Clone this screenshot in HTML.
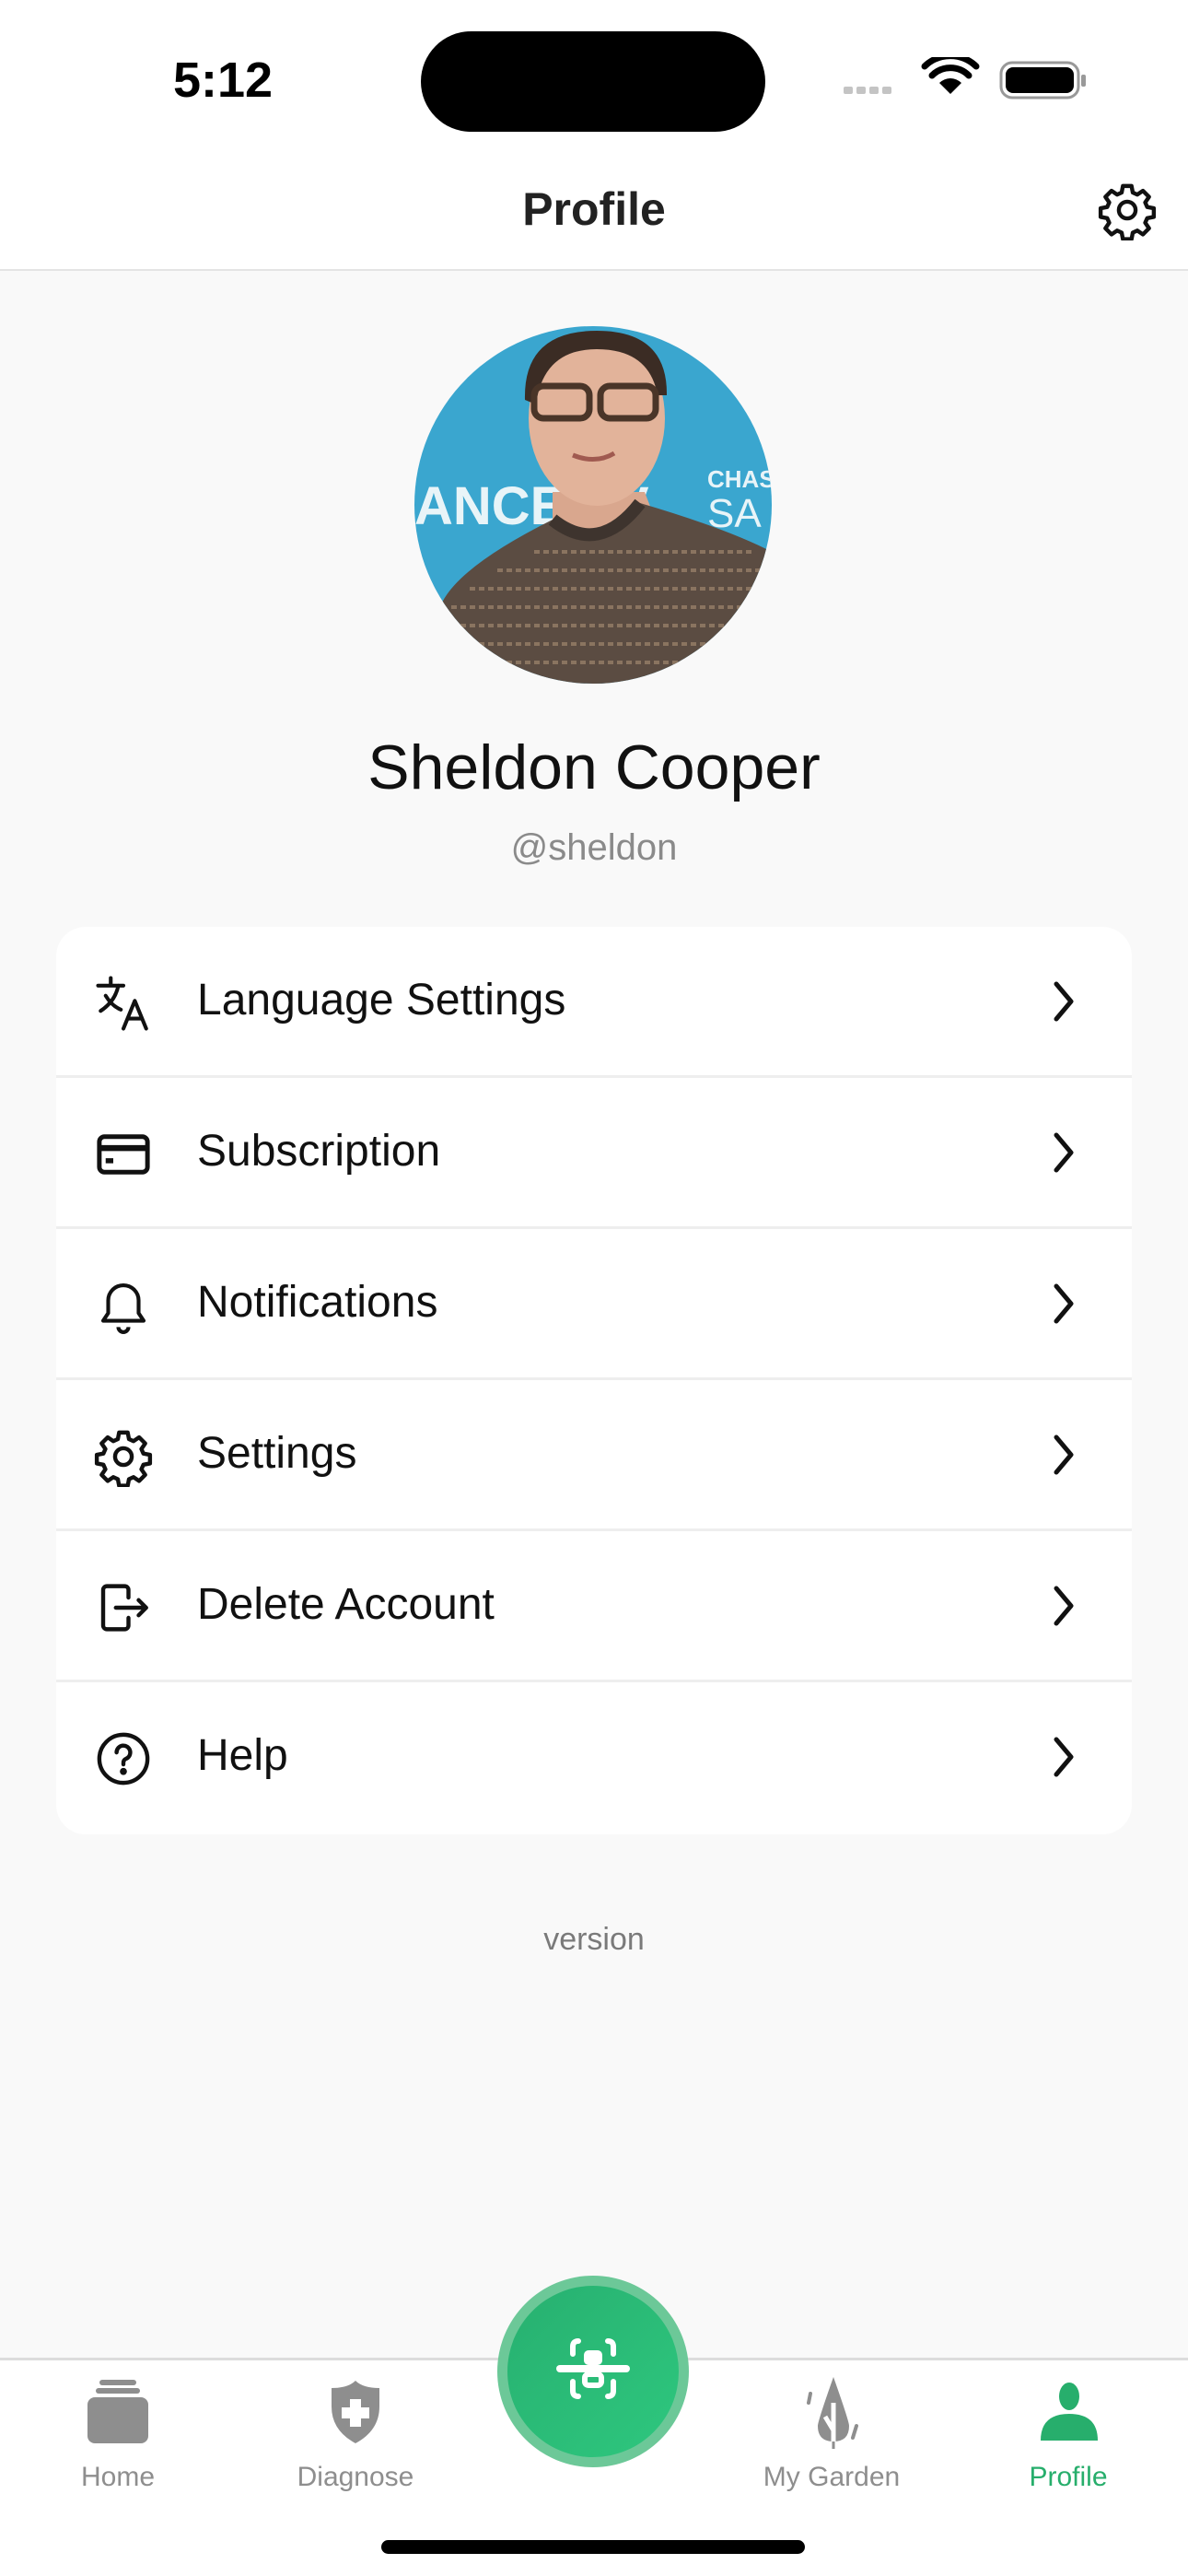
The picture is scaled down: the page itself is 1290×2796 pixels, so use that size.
<!DOCTYPE html>
<html><head><meta charset="utf-8"><style>
*{margin:0;padding:0;box-sizing:border-box}
body{width:1290px;height:2796px;background:#f9f9f9;font-family:"Liberation Sans",sans-serif;position:relative;overflow:hidden}
.abs{position:absolute}
.top{left:0;top:0;width:1290px;height:294px;background:#fff;border-bottom:2px solid #e4e4e4}
.card{left:61px;top:1006px;width:1168px;height:985px;background:#fff;border-radius:32px;overflow:hidden}
.row{position:relative;height:164px;border-bottom:3px solid #eeeeee}
.row:last-child{border-bottom:none}
.row .t{position:absolute;left:153px;top:0;line-height:160px;font-size:48px;color:#111}
.row svg.ic{position:absolute;left:40px;top:50px}
.row svg.ch{position:absolute;left:1074px;top:56px}
.tab{left:0;top:2559px;width:1290px;height:237px;background:#fff;border-top:3px solid #dcdcdc}
.lbl{font-size:30px;color:#8e8e8e;text-align:center;width:240px}
</style></head><body>
<div class="abs top"></div>
<div class="abs" style="left:188px;top:56px;font-size:54px;font-weight:bold;color:#000">5:12</div>
<div class="abs" style="left:457px;top:34px;width:374px;height:109px;background:#000;border-radius:55px"></div>
<svg class="abs" style="left:912px;top:62px" width="270" height="52">
<g fill="#c4c4c4"><rect x="4" y="32" width="10" height="8" rx="2"/><rect x="18" y="32" width="10" height="8" rx="2"/><rect x="32" y="32" width="10" height="8" rx="2"/><rect x="46" y="32" width="10" height="8" rx="2"/></g>
<path d="M120 40 L108 28 A17 17 0 0 1 132 28 Z" fill="#000"/>
<path d="M100 20 A28 28 0 0 1 140 20" stroke="#000" stroke-width="7" fill="none" stroke-linecap="round"/>
<path d="M92 10 A40 40 0 0 1 148 10" stroke="#000" stroke-width="7" fill="none" stroke-linecap="round"/>
<rect x="175" y="6" width="84" height="38" rx="12" fill="none" stroke="#999" stroke-width="3"/>
<rect x="180" y="11" width="74" height="28" rx="8" fill="#000"/>
<rect x="262" y="19" width="5" height="13" rx="2" fill="#999"/>
</svg>
<div class="abs" style="left:0;width:1290px;top:198px;text-align:center;font-size:50px;font-weight:bold;color:#222">Profile</div>
<svg class="abs" style="left:1191px;top:195px" width="66" height="66" viewBox="0 0 24 24" fill="none" stroke="#111" stroke-width="1.6" stroke-linejoin="round"><path d="M10.3 2.5h3.4l.5 2.6 1.8.8 2.2-1.5 2.4 2.4-1.5 2.2.8 1.8 2.6.5v3.4l-2.6.5-.8 1.8 1.5 2.2-2.4 2.4-2.2-1.5-1.8.8-.5 2.6h-3.4l-.5-2.6-1.8-.8-2.2 1.5-2.4-2.4 1.5-2.2-.8-1.8-2.6-.5v-3.4l2.6-.5.8-1.8-1.5-2.2 2.4-2.4 2.2 1.5 1.8-.8z"/><circle cx="12" cy="12" r="3.3"/></svg>

<svg class="abs" style="left:450px;top:354px" width="388" height="388" viewBox="0 0 388 388">
<defs><clipPath id="c"><circle cx="194" cy="194" r="194"/></clipPath></defs>
<g clip-path="url(#c)">
<rect width="388" height="388" fill="#3aa6cf"/>
<text x="0" y="215" font-size="58" font-weight="bold" fill="#e8f4f8" font-family="Liberation Sans Narrow,Liberation Sans,sans-serif">ANCE TV</text>
<text x="318" y="175" font-size="26" font-weight="bold" fill="#e8f4f8">CHAS</text>
<text x="318" y="218" font-size="44" fill="#e8f4f8">SA</text>
<path d="M150 180 L250 180 L275 245 L150 250 Z" fill="#d9a78e"/>
<ellipse cx="198" cy="100" rx="74" ry="95" fill="#e2b39a"/>
<path d="M120 80 Q118 5 198 5 Q275 5 274 75 L264 75 Q255 25 198 25 Q140 25 132 85 Z" fill="#3b2c24"/>
<rect x="130" y="65" width="60" height="35" rx="10" fill="none" stroke="#4a3528" stroke-width="7"/>
<rect x="202" y="65" width="60" height="35" rx="10" fill="none" stroke="#4a3528" stroke-width="7"/>
<path d="M172 140 Q197 150 217 138" stroke="#a05a50" stroke-width="5" fill="none"/>
<path d="M30 300 Q50 260 150 210 Q200 240 245 192 Q340 220 388 245 L388 388 L30 388 Z" fill="#5b4c42"/>
<path d="M150 210 Q200 250 245 192" stroke="#3e342e" stroke-width="14" fill="none"/>
<g stroke="#8a7460" stroke-width="4" stroke-dasharray="6 4">
<path d="M60 285 H388"/><path d="M40 305 H388"/><path d="M30 325 H388"/><path d="M20 345 H388"/><path d="M20 365 H388"/><path d="M90 265 H388"/><path d="M130 245 H370"/>
</g>
</g></svg>

<div class="abs" style="left:0;width:1290px;top:794px;text-align:center;font-size:68px;color:#111">Sheldon Cooper</div>
<div class="abs" style="left:0;width:1290px;top:898px;text-align:center;font-size:40px;color:#8a8a8a">@sheldon</div>

<div class="abs card">
<div class="row"><svg class="ic" width="66" height="66" viewBox="0 0 24 24" fill="none" stroke="#111" stroke-width="1.5" stroke-linecap="round" stroke-linejoin="round"><path d="M2 5h10M7 2v3M10 5c-1 5-4 8-7 10M5 9c1.5 2.5 3.5 4.5 6 5.5M12 22l4.5-11 4.5 11M13.8 18h5.4"/></svg><div class="t">Language Settings</div><svg class="ch" width="40" height="50" viewBox="0 0 40 50"><path d="M12 6 L28 25 L12 44" stroke="#111" stroke-width="5" fill="none" stroke-linecap="round" stroke-linejoin="round"/></svg></div>
<div class="row"><svg class="ic" width="66" height="66" viewBox="0 0 24 24" fill="none" stroke="#111" stroke-width="1.8"><rect x="2.5" y="5" width="19" height="14" rx="2"/><path d="M2.5 9.5h19" stroke-width="2.4"/><rect x="5" y="13.5" width="3" height="2" fill="#111" stroke="none"/></svg><div class="t">Subscription</div><svg class="ch" width="40" height="50" viewBox="0 0 40 50"><path d="M12 6 L28 25 L12 44" stroke="#111" stroke-width="5" fill="none" stroke-linecap="round" stroke-linejoin="round"/></svg></div>
<div class="row"><svg class="ic" width="66" height="66" viewBox="0 0 24 24" fill="none" stroke="#111" stroke-width="1.5" stroke-linejoin="round"><path d="M6 10a6 6 0 0 1 12 0v5l2 3H4l2-3z"/><path d="M10 20.5a2 2 0 0 0 4 0"/></svg><div class="t">Notifications</div><svg class="ch" width="40" height="50" viewBox="0 0 40 50"><path d="M12 6 L28 25 L12 44" stroke="#111" stroke-width="5" fill="none" stroke-linecap="round" stroke-linejoin="round"/></svg></div>
<div class="row"><svg class="ic" width="66" height="66" viewBox="0 0 24 24" fill="none" stroke="#111" stroke-width="1.6" stroke-linejoin="round"><path d="M10.3 2.5h3.4l.5 2.6 1.8.8 2.2-1.5 2.4 2.4-1.5 2.2.8 1.8 2.6.5v3.4l-2.6.5-.8 1.8 1.5 2.2-2.4 2.4-2.2-1.5-1.8.8-.5 2.6h-3.4l-.5-2.6-1.8-.8-2.2 1.5-2.4-2.4 1.5-2.2-.8-1.8-2.6-.5v-3.4l2.6-.5.8-1.8-1.5-2.2 2.4-2.4 2.2 1.5 1.8-.8z"/><circle cx="12" cy="12" r="3.3"/></svg><div class="t">Settings</div><svg class="ch" width="40" height="50" viewBox="0 0 40 50"><path d="M12 6 L28 25 L12 44" stroke="#111" stroke-width="5" fill="none" stroke-linecap="round" stroke-linejoin="round"/></svg></div>
<div class="row"><svg class="ic" width="66" height="66" viewBox="0 0 24 24" fill="none" stroke="#111" stroke-width="1.6" stroke-linecap="round" stroke-linejoin="round"><path d="M14 8V5a1.5 1.5 0 0 0-1.5-1.5h-7A1.5 1.5 0 0 0 4 5v14a1.5 1.5 0 0 0 1.5 1.5h7A1.5 1.5 0 0 0 14 19v-3M9 12h12M18 9l3 3-3 3"/></svg><div class="t">Delete Account</div><svg class="ch" width="40" height="50" viewBox="0 0 40 50"><path d="M12 6 L28 25 L12 44" stroke="#111" stroke-width="5" fill="none" stroke-linecap="round" stroke-linejoin="round"/></svg></div>
<div class="row"><svg class="ic" width="66" height="66" viewBox="0 0 24 24" fill="none" stroke="#111" stroke-width="1.6" stroke-linecap="round"><circle cx="12" cy="12" r="9.5"/><path d="M9.3 9.5a2.7 2.7 0 1 1 3.7 2.5c-.7.3-1 .9-1 1.6v.6"/><circle cx="12" cy="17" r=".6" fill="#111"/></svg><div class="t">Help</div><svg class="ch" width="40" height="50" viewBox="0 0 40 50"><path d="M12 6 L28 25 L12 44" stroke="#111" stroke-width="5" fill="none" stroke-linecap="round" stroke-linejoin="round"/></svg></div>
</div>

<div class="abs" style="left:0;width:1290px;top:2086px;text-align:center;font-size:34px;color:#7a7a7a">version</div>

<div class="abs tab"></div>
<svg class="abs" style="left:91px;top:2580px" width="76" height="76" viewBox="0 0 76 76"><rect x="4" y="22" width="66" height="50" rx="8" fill="#8e8e8e"/><rect x="13" y="12" width="48" height="6" rx="3" fill="#8e8e8e"/><rect x="17" y="3" width="40" height="6" rx="3" fill="#8e8e8e"/></svg>
<svg class="abs" style="left:354px;top:2582px" width="64" height="72" viewBox="0 0 64 72"><path d="M32 2 Q24 10 6 10 V30 Q6 56 32 70 Q58 56 58 30 V10 Q40 10 32 2Z" fill="#8e8e8e"/><rect x="26" y="22" width="12" height="30" fill="#fff"/><rect x="17" y="31" width="30" height="12" fill="#fff"/></svg>
<div class="abs" style="left:540px;top:2470px;width:208px;height:208px;border-radius:50%;background:#6cc898"></div>
<div class="abs" style="left:551px;top:2481px;width:186px;height:186px;border-radius:50%;background:linear-gradient(135deg,#27b070,#2ec77e)"></div>
<svg class="abs" style="left:604px;top:2537px" width="80" height="68" viewBox="0 0 80 68" fill="none" stroke="#fff" stroke-width="6" stroke-linecap="round"><path d="M18 18 V10 Q18 4 24 4 M56 4 Q62 4 62 10 V18 M18 48 V58 Q18 64 24 64 M56 64 Q62 64 62 58 V48"/><path d="M4 34 H76" stroke-width="8"/><rect x="30" y="14" width="20" height="16" rx="5" fill="#fff" stroke="none"/><rect x="31" y="40" width="18" height="12" rx="4"/></svg>
<svg class="abs" style="left:868px;top:2578px" width="74" height="84" viewBox="0 0 74 84"><path d="M37 2 Q20 50 20 55 Q20 72 37 72 Q54 72 54 55 Q54 50 37 2Z" fill="#8e8e8e"/><path d="M37 30 V80 M37 60 L28 45" stroke="#fff" stroke-width="5" fill="none"/><path d="M37 72 V80" stroke="#8e8e8e" stroke-width="3"/><path d="M12 20 L10 30 M62 55 L58 68" stroke="#8e8e8e" stroke-width="4" stroke-linecap="round"/></svg>
<svg class="abs" style="left:1126px;top:2584px" width="70" height="66" viewBox="0 0 70 66"><ellipse cx="35" cy="17" rx="11" ry="15" fill="#27ae6c"/><path d="M4 65 Q4 36 35 36 Q66 36 66 65Z" fill="#27ae6c"/></svg>
<div class="abs lbl" style="left:8px;top:2672px">Home</div>
<div class="abs lbl" style="left:266px;top:2672px">Diagnose</div>
<div class="abs lbl" style="left:783px;top:2672px">My Garden</div>
<div class="abs lbl" style="left:1040px;top:2672px;color:#27ae6c">Profile</div>
<div class="abs" style="left:414px;top:2757px;width:460px;height:15px;border-radius:8px;background:#000"></div>
</body></html>
